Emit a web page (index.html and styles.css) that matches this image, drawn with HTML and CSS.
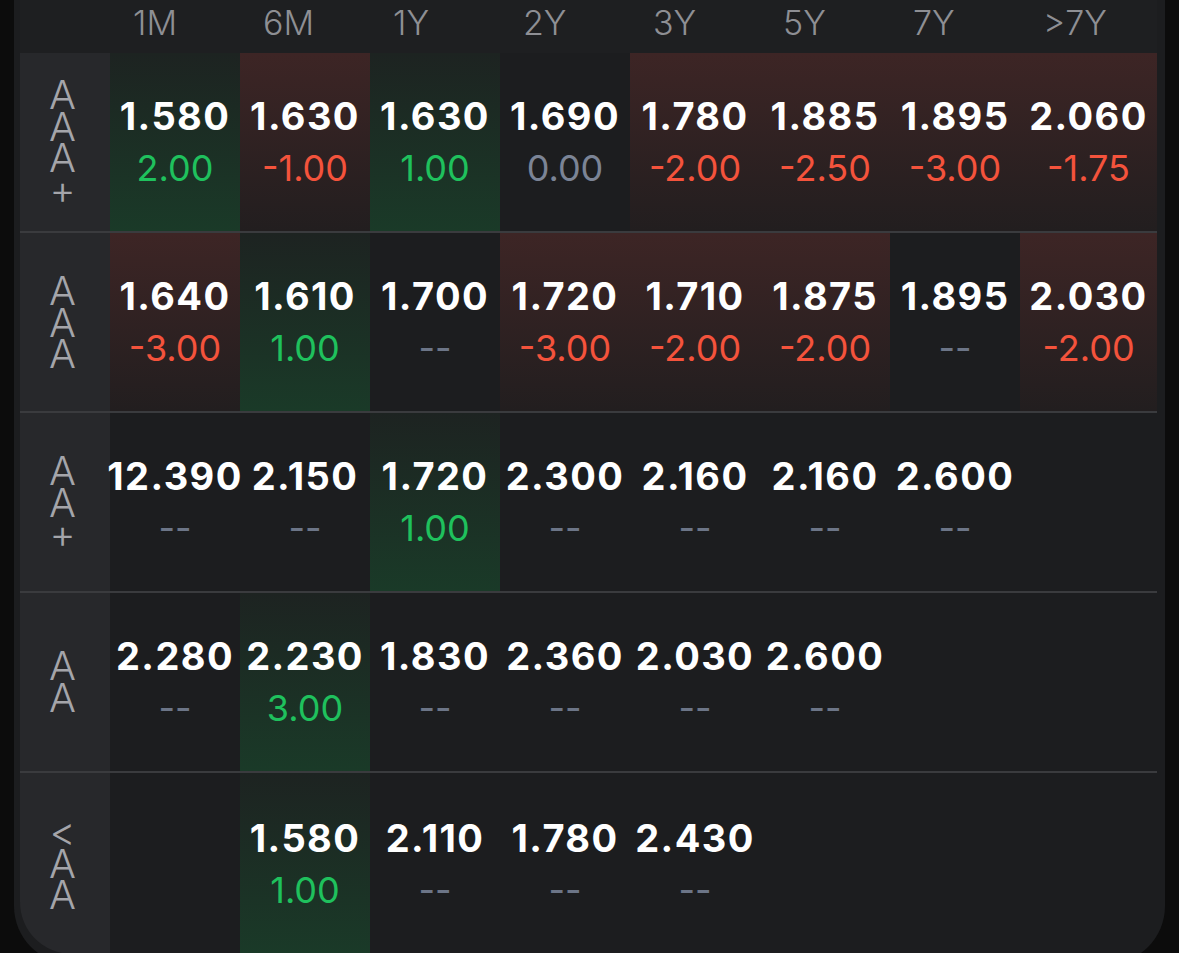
FILE: index.html
```html
<!DOCTYPE html>
<html lang="en">
<head>
    <meta charset="UTF-8">
    <meta name="viewport" content="width=device-width, initial-scale=1.0">
    <title>Yield board</title>
    <link rel="stylesheet" href="styles.css">
</head>
<body>

<div class="board">
    <div class="head">
        <div></div>
        <div class="term">1M</div>
        <div class="term">6M</div>
        <div class="term">1Y</div>
        <div class="term">2Y</div>
        <div class="term">3Y</div>
        <div class="term">5Y</div>
        <div class="term">7Y</div>
        <div class="term">&gt;7Y</div>
    </div>

    <!-- AAA+ -->
    <div class="row">
        <div class="rating"><span>AAA+</span></div>
        <div class="cell up"><span class="px">1.580</span><span class="chg pos">2.00</span></div>
        <div class="cell down"><span class="px">1.630</span><span class="chg neg">-1.00</span></div>
        <div class="cell up"><span class="px">1.630</span><span class="chg pos">1.00</span></div>
        <div class="cell"><span class="px">1.690</span><span class="chg zero">0.00</span></div>
        <div class="cell down"><span class="px">1.780</span><span class="chg neg">-2.00</span></div>
        <div class="cell down"><span class="px">1.885</span><span class="chg neg">-2.50</span></div>
        <div class="cell down"><span class="px">1.895</span><span class="chg neg">-3.00</span></div>
        <div class="cell down"><span class="px">2.060</span><span class="chg neg">-1.75</span></div>
    </div>

    <!-- AAA -->
    <div class="row">
        <div class="rating"><span>AAA</span></div>
        <div class="cell down"><span class="px">1.640</span><span class="chg neg">-3.00</span></div>
        <div class="cell up"><span class="px">1.610</span><span class="chg pos">1.00</span></div>
        <div class="cell"><span class="px">1.700</span><span class="chg none">--</span></div>
        <div class="cell down"><span class="px">1.720</span><span class="chg neg">-3.00</span></div>
        <div class="cell down"><span class="px">1.710</span><span class="chg neg">-2.00</span></div>
        <div class="cell down"><span class="px">1.875</span><span class="chg neg">-2.00</span></div>
        <div class="cell"><span class="px">1.895</span><span class="chg none">--</span></div>
        <div class="cell down"><span class="px">2.030</span><span class="chg neg">-2.00</span></div>
    </div>

    <!-- AA+ -->
    <div class="row">
        <div class="rating"><span>AA+</span></div>
        <div class="cell"><span class="px">12.390</span><span class="chg none">--</span></div>
        <div class="cell"><span class="px">2.150</span><span class="chg none">--</span></div>
        <div class="cell up"><span class="px">1.720</span><span class="chg pos">1.00</span></div>
        <div class="cell"><span class="px">2.300</span><span class="chg none">--</span></div>
        <div class="cell"><span class="px">2.160</span><span class="chg none">--</span></div>
        <div class="cell"><span class="px">2.160</span><span class="chg none">--</span></div>
        <div class="cell"><span class="px">2.600</span><span class="chg none">--</span></div>
        <div class="cell"></div>
    </div>

    <!-- AA -->
    <div class="row">
        <div class="rating"><span>AA</span></div>
        <div class="cell"><span class="px">2.280</span><span class="chg none">--</span></div>
        <div class="cell up"><span class="px">2.230</span><span class="chg pos">3.00</span></div>
        <div class="cell"><span class="px">1.830</span><span class="chg none">--</span></div>
        <div class="cell"><span class="px">2.360</span><span class="chg none">--</span></div>
        <div class="cell"><span class="px">2.030</span><span class="chg none">--</span></div>
        <div class="cell"><span class="px">2.600</span><span class="chg none">--</span></div>
        <div class="cell"></div>
        <div class="cell"></div>
    </div>

    <!-- <AA -->
    <div class="row last">
        <div class="rating"><span>&lt;AA</span></div>
        <div class="cell"></div>
        <div class="cell up"><span class="px">1.580</span><span class="chg pos">1.00</span></div>
        <div class="cell"><span class="px">2.110</span><span class="chg none">--</span></div>
        <div class="cell"><span class="px">1.780</span><span class="chg none">--</span></div>
        <div class="cell"><span class="px">2.430</span><span class="chg none">--</span></div>
        <div class="cell"></div>
        <div class="cell"></div>
        <div class="cell"></div>
    </div>
</div>

</body>
</html>
```

FILE: styles.css
```css
body {
    margin: 0;
    padding: 0;
    height: 953px;
    overflow: hidden;
    background-color: #0c0c0c;
    font-family: Inter, "Liberation Sans", sans-serif;
}
.board {
    margin-left: 14px;
    width: 1151px;
    padding: 0 8px 10px 6px;
    box-sizing: border-box;
    background-color: #1c1d1f;
    border-radius: 0 0 58px 58px;
}
.head,
.row {
    display: grid;
    grid-template-columns: 90px repeat(7, 130px) 1fr;
}
.head {
    height: 53px;
    background-color: #1e1f21;
}
.head .term {
    padding: 6px 0 0 23px;
    font-size: 34px;
    line-height: 34px;
    font-weight: 300;
    color: #8e8f94;
}
.row {
    height: 178px;
    border-bottom: 2px solid #3a3b3e;
}
.row.last {
    height: 181px;
    border-bottom: none;
}
.rating {
    display: flex;
    align-items: center;
    justify-content: center;
    padding: 0 6px 18px 0;
    background-color: #27282b;
    font-size: 40px;
    font-weight: 300;
    color: #a4a5aa;
}
.rating span {
    writing-mode: vertical-lr;
    text-orientation: upright;
    line-height: 1;
    letter-spacing: -17.4px;
}
.row.last .rating {
    border-bottom-left-radius: 52px;
}
.cell {
    display: flex;
    flex-direction: column;
    align-items: center;
    justify-content: center;
    font-size: 36px;
    line-height: 52px;
    white-space: nowrap;
}
.cell.up {
    background: linear-gradient(180deg, #1d2321 0%, #1a3a28 100%);
}
.cell.down {
    background: linear-gradient(180deg, #3d2525 0%, #221e1f 100%);
}
.px {
    color: #fff;
    font-size: 38px;
    font-weight: 700;
    letter-spacing: 1.4px;
}
.chg {
    font-weight: 400;
}
.pos { color: #1fc15d; }
.neg { color: #f4533c; }
.zero { color: #7b8496; }
.none { color: #6c7587; }
```
